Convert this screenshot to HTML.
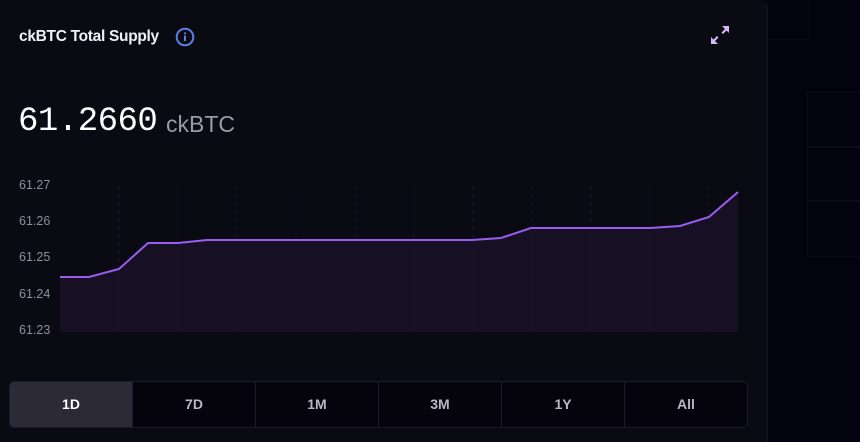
<!DOCTYPE html>
<html><head><style>
body{margin:0;width:860px;height:442px;background:#03020f;font-family:"Liberation Sans",sans-serif;overflow:hidden;position:relative}
.card{position:absolute;left:0;top:0;width:767px;height:442px;background:#0a0a13;border-right:1px solid #15141f;border-radius:0 8px 0 0}
.t{position:absolute;left:19px;top:28px;color:#f1f1f5;font-size:15.5px;font-weight:bold;letter-spacing:-0.3px}
.v{position:absolute;left:18px;top:103px;color:#fff;font-family:"Liberation Mono",monospace;font-size:34px;letter-spacing:-0.5px}
.u{position:absolute;left:166px;top:111px;color:#9b9aa6;font-size:23px}
.yl{position:absolute;left:19px;color:#8f8e99;font-size:12.5px}
.btns{position:absolute;left:9px;top:381px;width:737px;height:45px;border:1px solid #1c1b27;border-radius:5px;display:flex;overflow:hidden;background:#05040d}
.btns div{flex:1;text-align:center;line-height:45px;color:#b8b7c2;font-size:14px;font-weight:bold;border-right:1px solid #1c1b27}
.btns div:last-child{border-right:none}
.btns .a{background:#2b2a36;color:#fff}
.bx{position:absolute;border:1px solid #0c0b18}
</style></head><body>
<div class="bx" style="left:760px;top:-2px;width:48px;height:40px"></div>
<div class="bx" style="left:807px;top:92px;width:60px;height:54px"></div>
<div class="bx" style="left:807px;top:146px;width:60px;height:54px"></div>
<div class="bx" style="left:807px;top:200px;width:60px;height:55px"></div>
<div class="card"></div>
<div class="t">ckBTC Total Supply</div>
<svg style="position:absolute;left:175px;top:27px" width="20" height="20" viewBox="0 0 20 20"><circle cx="10" cy="10" r="8.3" fill="none" stroke="#5b7fe6" stroke-width="2"/><rect x="9" y="8.5" width="2" height="5.5" fill="#5b7fe6"/><circle cx="10" cy="6.3" r="1.1" fill="#5b7fe6"/></svg>
<svg style="position:absolute;left:710px;top:25px" width="20" height="20" viewBox="0 0 20 20" fill="#d9b6f5"><path d="M12 1h7v7l-2.5-2.5-3.5 3.5-1.5-1.5 3.5-3.5z"/><path d="M8 19H1v-7l2.5 2.5 3.5-3.5 1.5 1.5-3.5 3.5z"/></svg>
<div class="v">61.2660</div><div class="u">ckBTC</div>
<div class="yl" style="top:178px">61.27</div>
<div class="yl" style="top:214px">61.26</div>
<div class="yl" style="top:250px">61.25</div>
<div class="yl" style="top:287px">61.24</div>
<div class="yl" style="top:323px">61.23</div>
<svg style="position:absolute;left:0;top:0" width="767" height="442">
<g stroke="#17152a" stroke-dasharray="4 4" stroke-width="1">
<line x1="119" y1="186" x2="119" y2="332"/><line x1="178" y1="186" x2="178" y2="332"/><line x1="237" y1="186" x2="237" y2="332"/><line x1="296" y1="186" x2="296" y2="332"/><line x1="355" y1="186" x2="355" y2="332"/><line x1="414" y1="186" x2="414" y2="332"/><line x1="473" y1="186" x2="473" y2="332"/><line x1="532" y1="186" x2="532" y2="332"/><line x1="591" y1="186" x2="591" y2="332"/><line x1="650" y1="186" x2="650" y2="332"/><line x1="709" y1="186" x2="709" y2="332"/>
</g>
<path d="M60,277 L89,277 L119,269 L148,243 L178,243 L207,240 L472,240 L501,238 L531,228 L650,228 L680,226 L709,217 L738,192 L738,332 L60,332Z" fill="#1a1229" fill-opacity="0.85"/>
<path d="M60,277 L89,277 L119,269 L148,243 L178,243 L207,240 L472,240 L501,238 L531,228 L650,228 L680,226 L709,217 L738,192" fill="none" stroke="#9b5cf0" stroke-width="2"/>
</svg>
<div class="btns"><div class="a">1D</div><div>7D</div><div>1M</div><div>3M</div><div>1Y</div><div>All</div></div>
</body></html>
